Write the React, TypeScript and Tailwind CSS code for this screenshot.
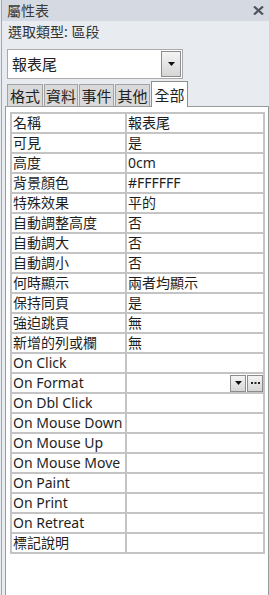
import React from 'react';

type Row = { label: string; value: string; buttons?: boolean };

const rows: Row[] = [
  { label: '名稱', value: '報表尾' },
  { label: '可見', value: '是' },
  { label: '高度', value: '0cm' },
  { label: '背景顏色', value: '#FFFFFF' },
  { label: '特殊效果', value: '平的' },
  { label: '自動調整高度', value: '否' },
  { label: '自動調大', value: '否' },
  { label: '自動調小', value: '否' },
  { label: '何時顯示', value: '兩者均顯示' },
  { label: '保持同頁', value: '是' },
  { label: '強迫跳頁', value: '無' },
  { label: '新增的列或欄', value: '無' },
  { label: 'On Click', value: '' },
  { label: 'On Format', value: '', buttons: true },
  { label: 'On Dbl Click', value: '' },
  { label: 'On Mouse Down', value: '' },
  { label: 'On Mouse Up', value: '' },
  { label: 'On Mouse Move', value: '' },
  { label: 'On Paint', value: '' },
  { label: 'On Print', value: '' },
  { label: 'On Retreat', value: '' },
  { label: '標記說明', value: '' },
];

const tabs = ['格式', '資料', '事件', '其他', '全部'];
const tabWidths = ['w-[36px]', 'w-[34px]', 'w-[35px]', 'w-[35px]', 'w-[37px]'];

const font = { fontFamily: '"Noto Sans", "Noto Sans CJK TC", sans-serif' };

const DownArrow = () => (
  <svg width="7" height="4" viewBox="0 0 7 4">
    <path d="M0 0 H7 L3.5 4 Z" fill="#111" />
  </svg>
);

const Dots = () => (
  <svg width="9" height="2" viewBox="0 0 9 2">
    <rect x="0" y="0" width="2" height="2" fill="#222" />
    <rect x="3.5" y="0" width="2" height="2" fill="#222" />
    <rect x="7" y="0" width="2" height="2" fill="#222" />
  </svg>
);

const SmallButton: React.FC<{ children: React.ReactNode; className?: string }> = ({ children, className }) => (
  <div
    className={`flex items-center justify-center border border-[#8c8c8c] bg-gradient-to-b from-[#f4f4f4] to-[#d6d6d6] ${className ?? ''}`}
  >
    {children}
  </div>
);

export default function App() {
  return (
    <div className="w-[269px] h-[595px] bg-[#e8ebef] pl-px flex" style={font}>
      <div className="flex-1 flex flex-col border-l border-[#a3a8b0] min-w-0">
        {/* title bar */}
        <div className="h-[21px] bg-[#d5dae2] flex items-center justify-between pl-[5px] pr-[5px] text-[14px] text-[#3a3a3a] leading-[18px]">
          <span>屬性表</span>
          <svg width="11" height="9" viewBox="0 0 11 9">
            <path d="M1 0.5 L10 8.5 M10 0.5 L1 8.5" stroke="#4f545d" strokeWidth="2.2" />
          </svg>
        </div>

        <div className="h-[28px] pt-[2px] pl-[6px] text-[14px] leading-[18px] text-[#333]">選取類型: 區段</div>

        {/* combo box */}
        <div className="ml-[5px] w-[176px] h-[30px] border border-[#a9a9a9] bg-white flex items-center justify-between">
          <span className="pl-[4px] text-[15px] leading-[18px] text-[#222]">報表尾</span>
          <SmallButton className="w-[20px] h-[26px] mr-px">
            <DownArrow />
          </SmallButton>
        </div>

        {/* tabs */}
        <div className="h-[27px] flex items-end pl-[5px]">
          {tabs.map((t, i) => {
            const active = i === tabs.length - 1;
            return (
              <div
                key={t}
                className={
                  active
                    ? `${tabWidths[i]} h-[26px] -mb-px relative z-10 bg-white border border-b-0 border-[#8f8f8f] flex items-center justify-center text-[15px] text-[#222] leading-[18px]`
                    : `${tabWidths[i]} h-[22px] mr-px bg-[#d9d9d9] border border-b-0 border-[#a3a3a3] flex items-center justify-center text-[15px] text-[#222] leading-[18px]`
                }
              >
                {t}
              </div>
            );
          })}
        </div>

        {/* property panel */}
        <div className="flex-1 ml-[3px] bg-white border border-[#9a9a9a] border-b-0 pt-[5px] pl-[4px] pr-[3px]">
          <div className="border-t-2 border-l-2 border-[#c4c4c4]">
            {rows.map((r) => (
              <div key={r.label} className="flex h-[20px] text-[14px] leading-[18px] text-[#1e1e1e]">
                <div className="w-[115px] shrink-0 border-r-2 border-b-2 border-[#c4c4c4] pl-px whitespace-nowrap overflow-hidden">
                  {r.label}
                </div>
                <div className="flex-1 border-r-2 border-b-2 border-[#c4c4c4] pl-px flex items-center justify-between min-w-0">
                  <span>{r.value}</span>
                  {r.buttons && (
                    <div className="flex gap-px">
                      <SmallButton className="w-[16px] h-[17px]">
                        <DownArrow />
                      </SmallButton>
                      <SmallButton className="w-[16px] h-[17px]">
                        <Dots />
                      </SmallButton>
                    </div>
                  )}
                </div>
              </div>
            ))}
          </div>
        </div>
      </div>
    </div>
  );
}
